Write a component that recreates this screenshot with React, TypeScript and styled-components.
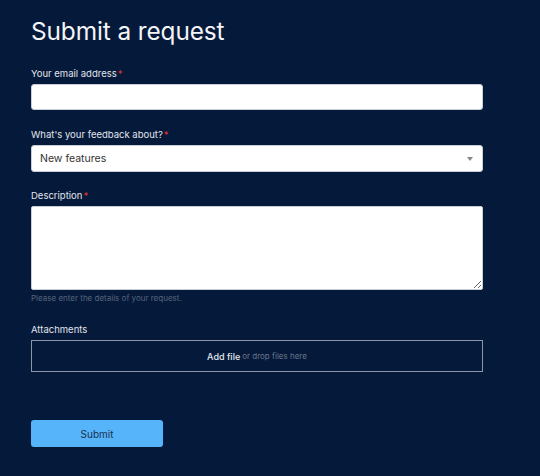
import React from "react";
import styled, { createGlobalStyle } from "styled-components";

const GlobalStyle = createGlobalStyle`
  html, body {
    margin: 0;
    padding: 0;
    background: #05193a;
  }
  body {
    font-family: Inter, "Noto Sans", sans-serif;
  }
`;

const Page = styled.div`
  width: 540px;
  height: 476px;
  background: #05193a;
  box-sizing: border-box;
  padding: 16px 0 0 31px;
  overflow: hidden;
`;

const Title = styled.h1`
  margin: 0 0 22px 0;
  font-size: 24.4px;
  font-weight: 400;
  line-height: 30px;
  color: #f3f5f8;
  letter-spacing: -0.1px;
`;

const Form = styled.form`
  width: 452px;
  display: flex;
  flex-direction: column;
`;

const Field = styled.div<{ $gap?: number }>`
  display: flex;
  flex-direction: column;
  margin-bottom: ${(p) => p.$gap ?? 20}px;
`;

const Label = styled.label`
  font-size: 9.5px;
  line-height: 12px;
  color: #e1e5eb;
  margin-bottom: 4px;

  span {
    color: #e0353b;
    margin-left: 1px;
  }
`;

const Input = styled.input`
  box-sizing: border-box;
  height: 26px;
  width: 100%;
  border: 1px solid #c9ced6;
  border-radius: 3px;
  background: #fff;
  outline: none;
`;

const SelectBox = styled.div`
  box-sizing: border-box;
  height: 27px;
  border: 1px solid #c9ced6;
  border-radius: 3px;
  background: #fff;
  display: flex;
  align-items: center;
  justify-content: space-between;
  padding: 0 9px 0 8px;
  font-size: 10.5px;
  color: #333;
`;

const Caret = styled.span`
  width: 0;
  height: 0;
  border-left: 3.5px solid transparent;
  border-right: 3.5px solid transparent;
  border-top: 4px solid #888;
`;

const TextArea = styled.textarea`
  box-sizing: border-box;
  height: 84px;
  width: 100%;
  border: 1px solid #c9ced6;
  border-radius: 2px;
  background: #fff;
  outline: none;
  resize: vertical;
`;

const Hint = styled.div`
  font-size: 8px;
  line-height: 10px;
  color: #56657b;
  margin-top: 3px;
`;

const DropZone = styled.div`
  box-sizing: border-box;
  height: 32px;
  border: 1px solid #8d96a3;
  display: flex;
  align-items: center;
  justify-content: center;
  font-size: 9px;

  b {
    font-weight: 500;
    color: #e6e9ee;
    margin-right: 2px;
  }
  span {
    font-size: 8px;
    color: #68768a;
  }
`;

const SubmitButton = styled.button`
  width: 132px;
  height: 27px;
  border: none;
  border-radius: 3px;
  background: #56b4fb;
  color: #1a3150;
  font-family: Inter, "Noto Sans", sans-serif;
  font-size: 10px;
  margin-top: 28px;
`;

export default function App() {
  return (
    <Page>
      <GlobalStyle />
      <Title>Submit a request</Title>
      <Form>
        <Field $gap={19}>
          <Label>
            Your email address<span>*</span>
          </Label>
          <Input type="email" />
        </Field>
        <Field $gap={18}>
          <Label>
            What's your feedback about?<span>*</span>
          </Label>
          <SelectBox>
            New features
            <Caret />
          </SelectBox>
        </Field>
        <Field $gap={21}>
          <Label>
            Description<span>*</span>
          </Label>
          <TextArea />
          <Hint>Please enter the details of your request.</Hint>
        </Field>
        <Field $gap={20}>
          <Label>Attachments</Label>
          <DropZone>
            <b>Add file</b>
            <span>or drop files here</span>
          </DropZone>
        </Field>
        <SubmitButton type="button">Submit</SubmitButton>
      </Form>
    </Page>
  );
}
